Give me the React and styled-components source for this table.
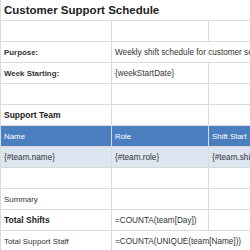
import React from "react";
import styled, { createGlobalStyle } from "styled-components";

const Global = createGlobalStyle`
  body {
    margin: 0;
    background: #fff;
    font-family: "Liberation Sans", Arial, sans-serif;
  }
`;

const Sheet = styled.div`
  width: 250px;
  height: 250px;
  overflow: hidden;
  border-left: 1px solid #dadada;
`;

const Row = styled.div`
  display: grid;
  grid-template-columns: 111px 97px 120px;
  height: 21px;
  background: ${(p) => p.$bg || "#fff"};
`;

const Cell = styled.div`
  grid-column: span ${(p) => p.$span || 1};
  box-sizing: border-box;
  height: 21px;
  border-right: 1px solid #dadada;
  border-bottom: 1px solid #dadada;
  padding: 0 3px;
  display: flex;
  align-items: center;
  white-space: nowrap;
  overflow: hidden;
  font-size: ${(p) => p.$size || 7.9}px;
  font-weight: ${(p) => (p.$bold ? 700 : 400)};
  color: ${(p) => p.$color || "#333"};
`;

const Value = styled(Cell)`
  font-size: 8.2px;
`;

const HeadCell = styled(Cell)`
  background: #4a7ebf;
  color: #fff;
  border-right-color: #d4dceb;
`;

export default function App() {
  return (
    <>
      <Global />
      <Sheet>
        <Row>
          <Cell $span={3} $size={11.5} $bold $color="#222">
            Customer Support Schedule
          </Cell>
        </Row>
        <Row>
          <Cell />
          <Cell />
          <Cell />
        </Row>
        <Row>
          <Cell $bold>Purpose:</Cell>
          <Value $span={2}>Weekly shift schedule for customer service team</Value>
        </Row>
        <Row>
          <Cell $bold>Week Starting:</Cell>
          <Value>{"{weekStartDate}"}</Value>
          <Cell />
        </Row>
        <Row>
          <Cell />
          <Cell />
          <Cell />
        </Row>
        <Row>
          <Cell $bold $size={8.5} $color="#222">Support Team</Cell>
          <Cell />
          <Cell />
        </Row>
        <Row>
          <HeadCell>Name</HeadCell>
          <HeadCell>Role</HeadCell>
          <HeadCell>Shift Start</HeadCell>
        </Row>
        <Row $bg="#dce6f1">
          <Value>{"{#team.name}"}</Value>
          <Value>{"{#team.role}"}</Value>
          <Value>{"{#team.shiftStart}"}</Value>
        </Row>
        <Row>
          <Cell />
          <Cell />
          <Cell />
        </Row>
        <Row>
          <Cell>Summary</Cell>
          <Cell />
          <Cell />
        </Row>
        <Row>
          <Cell $bold $size={8.5} $color="#222">Total Shifts</Cell>
          <Value>=COUNTA(team[Day])</Value>
          <Cell />
        </Row>
        <Row>
          <Cell>Total Support Staff</Cell>
          <Value $span={2}>=COUNTA(UNIQUE(team[Name]))</Value>
        </Row>
      </Sheet>
    </>
  );
}
